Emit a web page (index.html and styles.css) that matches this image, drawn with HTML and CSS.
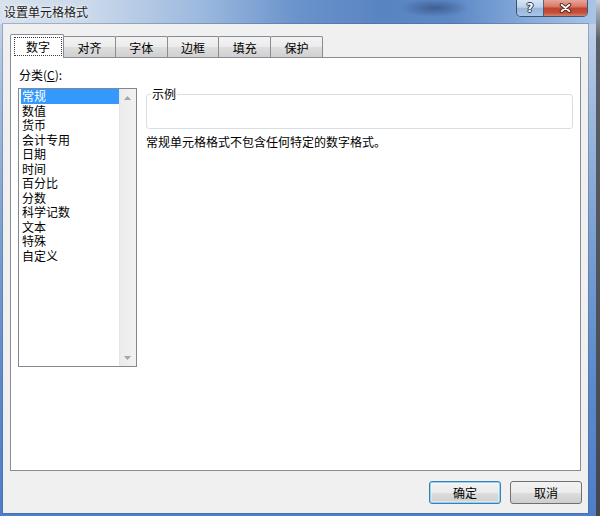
FILE: index.html
```html
<!DOCTYPE html>
<html lang="zh-CN">
<head>
<meta charset="utf-8">
<title>设置单元格格式</title>
<link rel="stylesheet" href="styles.css">
</head>
<body>
<div class="screen">
  <div class="window">
    <div class="titlebar">
      <span class="title">设置单元格格式</span>
      <div class="caption-buttons">
        <div class="cap-btn cap-help">?</div>
        <div class="cap-btn cap-close">
          <svg width="13" height="10" viewBox="0 0 13 10">
            <path d="M2.5 1.8 L10.5 8.2 M10.5 1.8 L2.5 8.2" stroke="#3b1d18" stroke-width="3.6" stroke-linecap="round" fill="none"/>
            <path d="M2.5 1.8 L10.5 8.2 M10.5 1.8 L2.5 8.2" stroke="#ffffff" stroke-width="1.8" stroke-linecap="round" fill="none"/>
          </svg>
        </div>
      </div>
    </div>
    <div class="frame-body">
      <div class="client">
        <div class="tabs">
          <div class="tab tab-selected"><span class="focus">数字</span></div>
          <div class="tab">对齐</div>
          <div class="tab">字体</div>
          <div class="tab">边框</div>
          <div class="tab">填充</div>
          <div class="tab">保护</div>
        </div>
        <div class="panel">
          <div class="left-col">
            <div class="label">分类(<u>C</u>):</div>
            <div class="listbox">
              <ul class="items">
                <li class="selected">常规</li>
                <li>数值</li>
                <li>货币</li>
                <li>会计专用</li>
                <li>日期</li>
                <li>时间</li>
                <li>百分比</li>
                <li>分数</li>
                <li>科学记数</li>
                <li>文本</li>
                <li>特殊</li>
                <li>自定义</li>
              </ul>
              <div class="scrollbar">
                <div class="sb-btn">
                  <svg width="7" height="4" viewBox="0 0 7 4"><polygon points="3.5,0 7,4 0,4" fill="#a6a6a6"/></svg>
                </div>
                <div class="sb-btn">
                  <svg width="7" height="4" viewBox="0 0 7 4"><polygon points="0,0 7,0 3.5,4" fill="#a6a6a6"/></svg>
                </div>
              </div>
            </div>
          </div>
          <div class="right-col">
            <fieldset class="sample">
              <legend>示例</legend>
              <div class="sample-body"></div>
            </fieldset>
            <p class="desc">常规单元格格式不包含任何特定的数字格式。</p>
          </div>
        </div>
        <div class="buttons">
          <div class="btn btn-default">确定</div>
          <div class="btn">取消</div>
        </div>
      </div>
    </div>
  </div>
  <div class="desktop"></div>
</div>
</body>
</html>
```

FILE: styles.css
```css
* { box-sizing: border-box; }
html, body { margin: 0; padding: 0; }
body {
  width: 600px;
  height: 516px;
  overflow: hidden;
  font-family: "Noto Sans CJK SC", "Noto Sans", sans-serif;
  font-size: 12px;
  color: #000;
  background: #4b4f56;
}
.screen { display: flex; width: 600px; height: 516px; }
.window {
  width: 596px;
  height: 516px;
  display: flex;
  flex-direction: column;
  background: linear-gradient(180deg, #cbd8ea 0%, #a4bddf 18%, #7ba0d2 45%, #5a89cc 75%, #4d7fc9 100%);
}
.desktop {
  width: 4px;
  background: linear-gradient(180deg, #c8d0da 0, #9aa3ae 14px, #5a5f67 40px, #44484e 100%);
}
.titlebar {
  height: 24px;
  flex: none;
  display: flex;
  justify-content: space-between;
  align-items: flex-start;
  padding: 0 8px 0 4px;
  background:
    radial-gradient(ellipse 34px 9px at 435px 8px, rgba(40, 62, 104, 0.55), rgba(40, 62, 104, 0) 100%),
    linear-gradient(90deg, #d8e2ee 0%, #c8d7ea 16%, #9bb8de 34%, #6a93cb 50%, #5884c2 64%, #5d88c6 76%, #7ea4d6 86%, #a9c4e6 100%);
}
.title {
  line-height: 24px;
  color: #1b1b1b;
  text-shadow: 0 0 6px rgba(255, 255, 255, 0.9), 0 0 3px rgba(255, 255, 255, 0.8);
}
.caption-buttons {
  display: flex;
  height: 17px;
  border: 1px solid rgba(34, 52, 82, 0.75);
  border-top: none;
  border-radius: 0 0 5px 5px;
  overflow: hidden;
}
.cap-btn {
  height: 16px;
  display: flex;
  align-items: center;
  justify-content: center;
}
.cap-help {
  width: 27px;
  border-right: 1px solid rgba(34, 52, 82, 0.7);
  background: linear-gradient(180deg, #d9e5f3 0%, #bed1ea 45%, #9ab6dc 52%, #a9c3e4 100%);
  color: #fff;
  font-family: "DejaVu Sans", sans-serif;
  font-weight: bold;
  font-size: 12px;
  line-height: 16px;
  text-shadow: 0 0 1px #1d2c45, 1px 0 0 #2a3a58, -1px 0 0 #2a3a58, 0 1px 0 #2a3a58, 0 -1px 0 #2a3a58;
}
.cap-close {
  width: 43px;
  background: linear-gradient(180deg, #e6a699 0%, #d87a69 40%, #c4432f 52%, #c3503c 80%, #d8806a 100%);
}
.frame-body {
  flex: 1;
  display: flex;
  padding: 0 8px 3px 3px;
}
.client {
  flex: 1;
  display: flex;
  flex-direction: column;
  background: #f0f0f0;
  padding: 10px 7px 9px 7px;
  box-shadow: 0 0 0 1px rgba(70, 90, 120, 0.35);
}
.tabs {
  height: 23px;
  display: flex;
  align-items: flex-end;
}
.tab {
  width: 52.8px;
  height: 21px;
  margin-left: -1px;
  border: 1px solid #898c95;
  border-bottom: none;
  border-radius: 2px 2px 0 0;
  background: linear-gradient(180deg, #f3f3f3 0%, #ebebeb 50%, #dedede 50%, #d0d0d0 100%);
  text-align: center;
  line-height: 20px;
  padding-top: 1px;
}
.tab:nth-child(2) { margin-left: -1px; }
.tab-selected {
  width: 54px;
  height: 24px;
  margin-left: 0;
  margin-bottom: -1px;
  position: relative;
  z-index: 1;
  background: #fff;
  padding: 2px 0 0 3px;
}
.focus {
  display: block;
  width: 48px;
  height: 19px;
  line-height: 17px;
  border: 1px dotted #3a3a3a;
  text-align: center;
}
.panel {
  height: 414px;
  display: flex;
  align-items: flex-start;
  background: #fff;
  border: 1px solid #898c95;
  padding: 9px 7px 0 7px;
}
.left-col { width: 119px; flex: none; }
.label {
  line-height: 16px;
  margin-left: 1px;
}
.label u { text-underline-offset: 1px; }
.listbox {
  margin-top: 5px;
  width: 119px;
  height: 279px;
  border: 1px solid #828790;
  display: flex;
  background: #fff;
}
.items {
  list-style: none;
  margin: 0;
  padding: 0 0 0 2px;
  flex: 1;
}
.items li {
  height: 14.5px;
  line-height: 14.5px;
  padding-left: 1px;
  white-space: nowrap;
}
.items li.selected { background: #3399ff; color: #fff; }
.scrollbar {
  width: 17px;
  flex: none;
  display: flex;
  flex-direction: column;
  justify-content: space-between;
  background: linear-gradient(90deg, #e4e4e4 0, #ececec 2px, #f1f1f1 100%);
}
.sb-btn {
  height: 17px;
  display: flex;
  align-items: center;
  justify-content: center;
}
.sb-btn svg { display: block; }
.right-col {
  flex: 1;
  margin-left: 9px;
  margin-top: 20px;
}
.sample {
  margin: 0;
  padding: 0;
  border: 1px solid #d5dfe5;
  border-radius: 3px;
  min-width: 0;
}
.sample legend {
  margin-left: 4px;
  padding: 0 1px;
  line-height: 14px;
}
.sample-body { height: 27px; }
.desc {
  margin: 5px 0 0 0;
  line-height: 16px;
}
.buttons {
  margin-top: 10px;
  margin-right: -1px;
  display: flex;
  justify-content: flex-end;
  gap: 9px;
}
.btn {
  width: 72px;
  height: 23px;
  border: 1px solid #707070;
  border-radius: 3px;
  background: linear-gradient(180deg, #f2f2f2 0%, #ebebeb 50%, #dddddd 50%, #cfcfcf 100%);
  text-align: center;
  line-height: 21px;
}
.btn-default {
  border-color: #3c7fb1;
  box-shadow: inset 0 0 0 1px #8cd3f5, inset 0 0 0 2px rgba(255, 255, 255, 0.4);
}
```
